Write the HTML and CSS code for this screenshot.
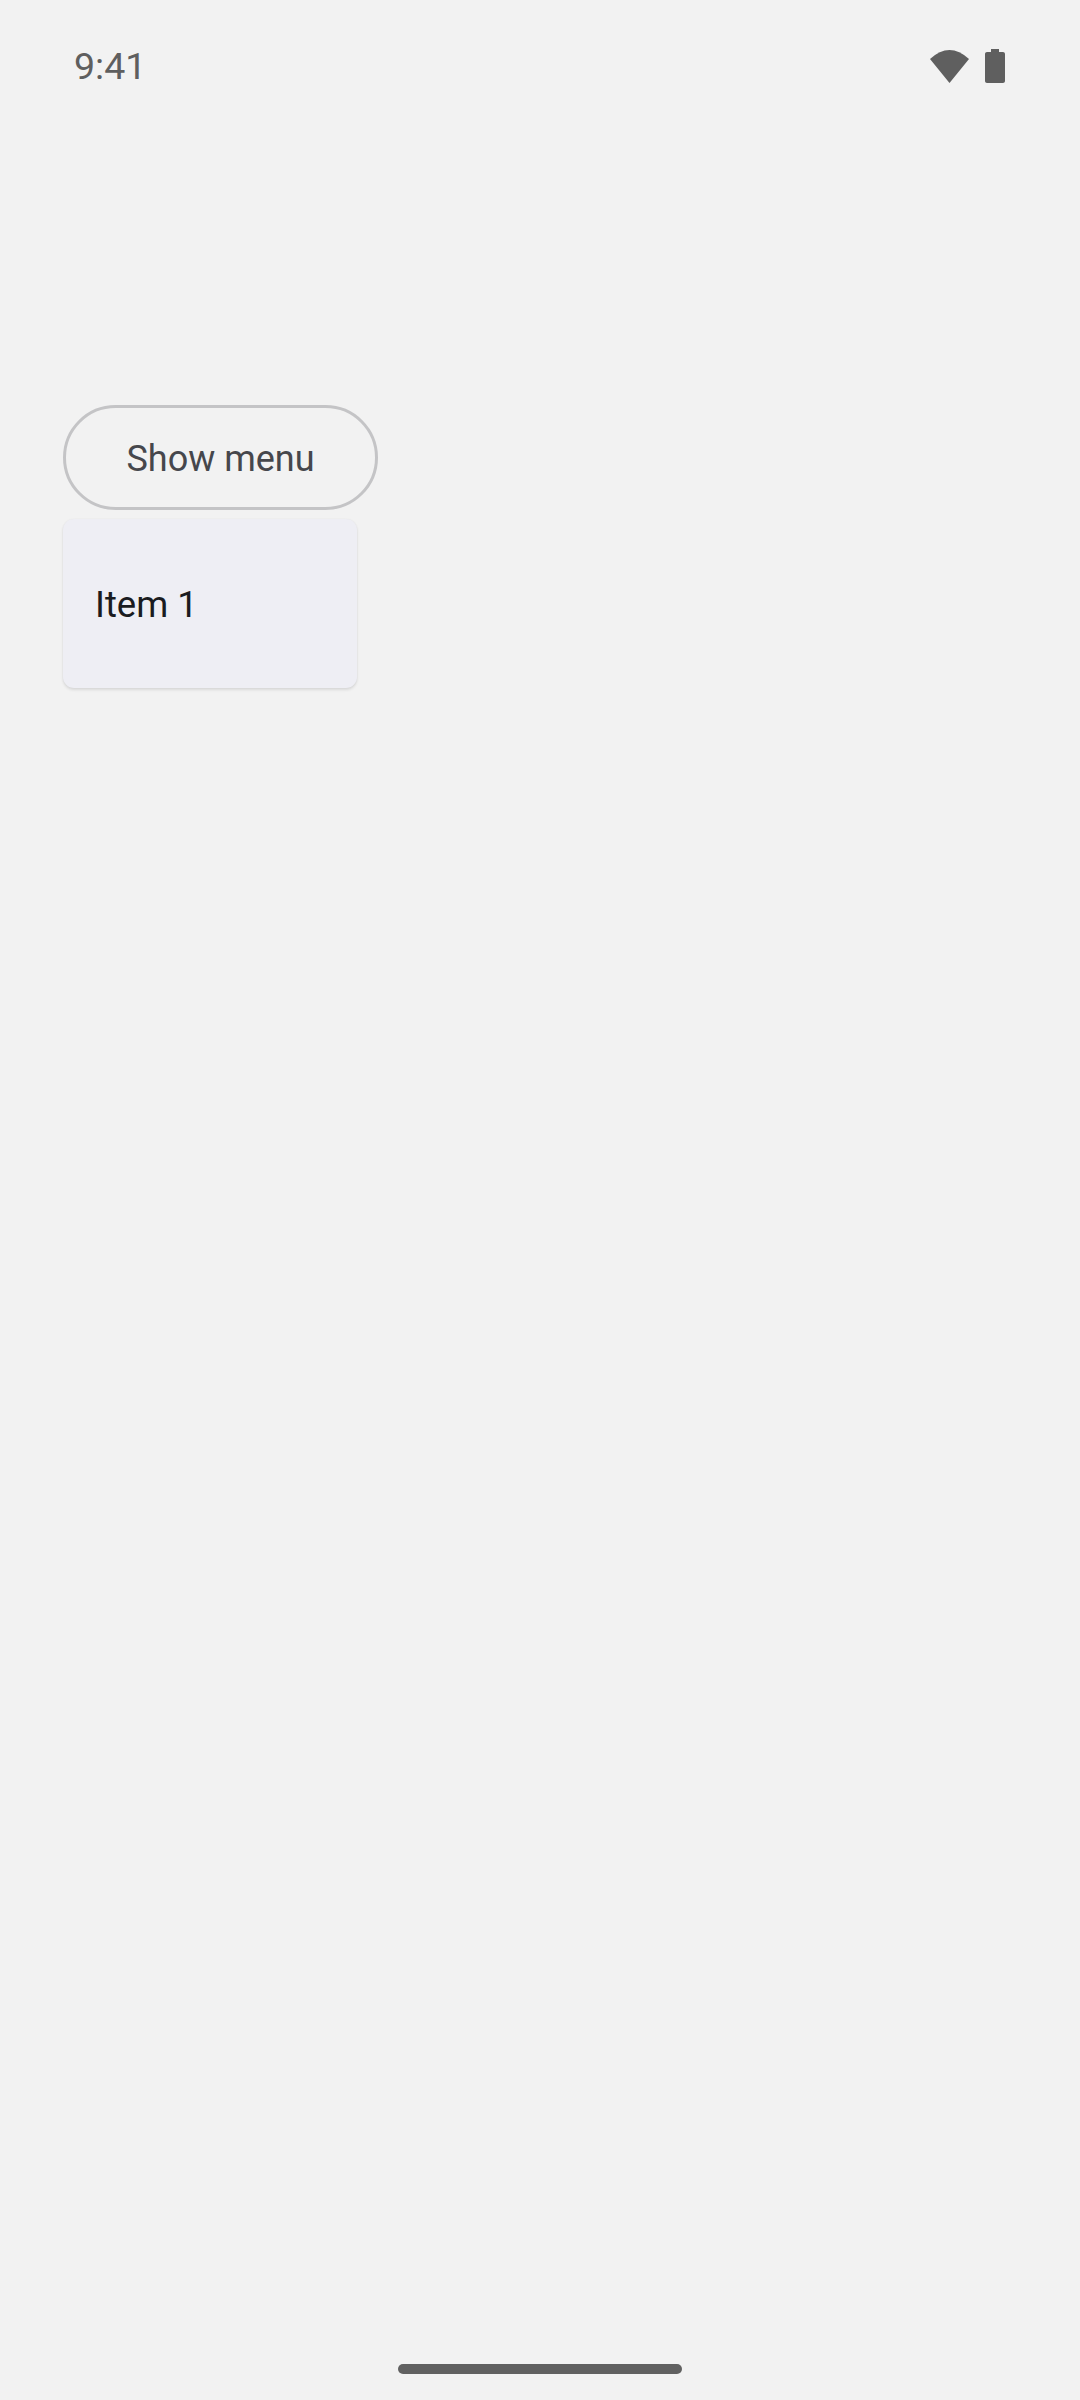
FILE: index.html
```html
<!DOCTYPE html>
<html lang="en">
<head>
<meta charset="utf-8">
<title>Show menu</title>
<link rel="stylesheet" href="styles.css">
</head>
<body>
<div class="page">
  <header class="status-bar">
    <span class="time">9:41</span>
    <div class="status-icons">
      <svg class="wifi" width="39" height="33" viewBox="0 0 39 33"><path d="M0 9Q19.500 -9 39 9L19.500 33Z"/></svg>
      <svg class="battery" width="20" height="34" viewBox="0 0 20 34"><path d="M6 0H14V3H18C19.100 3 20 3.900 20 5V32C20 33.100 19.100 34 18 34H2C.9 34 0 33.100 0 32V5C0 3.900 .9 3 2 3H6Z"/></svg>
    </div>
  </header>
  <main class="content">
    <button class="menu-button" type="button">Show menu</button>
    <div class="menu">
      <div class="menu-item">Item 1</div>
    </div>
  </main>
  <div class="nav-handle"></div>
</div>
</body>
</html>
```
FILE: styles.css
```css
* { box-sizing: border-box; }
html, body { margin: 0; padding: 0; }
body { background: #f2f2f2; font-family: Roboto, "Liberation Sans", sans-serif; }
.page { width: 1080px; height: 2400px; display: flex; flex-direction: column; }
.status-bar { display: flex; justify-content: space-between; align-items: center; height: 50px; margin-top: 41px; padding: 0 75px 0 74px; }
.time { font-size: 37.5px; line-height: 44px; color: #5f5f5f; }
.status-icons { display: flex; align-items: center; gap: 16px; }
.status-icons svg { display: block; fill: #5f5f5f; }
.content { display: flex; flex-direction: column; align-items: flex-start; margin-top: 314px; padding-left: 63px; }
.menu-button { width: 315px; height: 105px; padding: 2px 0 0; border: 3px solid #c4c4c6; border-radius: 53px; background: transparent; font-family: inherit; font-size: 36px; color: #46474c; }
.menu { width: 294px; height: 169px; margin-top: 9px; display: flex; align-items: center; padding: 2px 0 0 32px; background: #eeeef4; border-radius: 11px; box-shadow: 0 2px 3px rgba(0,0,0,.1), 0 0 2px rgba(0,0,0,.05); }
.menu-item { font-size: 36.5px; color: #1a1b20; }
.nav-handle { width: 284px; height: 10px; margin: auto 0 26px 398px; border-radius: 5px; background: #616161; }
```
